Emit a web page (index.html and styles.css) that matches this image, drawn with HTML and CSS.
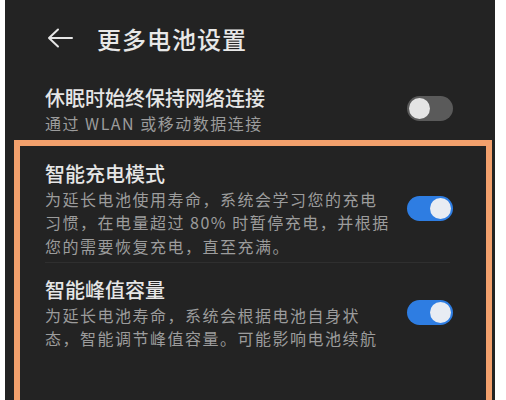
FILE: index.html
```html
<!doctype html>
<html lang="zh-CN">
<head>
    <meta charset="utf-8">
    <meta name="viewport" content="width=device-width, initial-scale=1.0">
    <title>更多电池设置</title>
    <link rel="stylesheet" href="styles.css">
</head>
<body>
    <div class="screen">
        <div class="header">
            <svg class="back" width="26" height="20" viewBox="0 0 26 20">
                <path d="M11 1.5 L2 10 L11 18.5 M2 10 H25" fill="none" stroke="#e6e6e6" stroke-width="2" stroke-linecap="round" stroke-linejoin="round"/>
            </svg>
            <h1 class="title">更多电池设置</h1>
        </div>

        <div class="item item-plain">
            <div class="text">
                <div class="item-title">休眠时始终保持网络连接</div>
                <div class="item-desc">通过 WLAN 或移动数据连接</div>
            </div>
            <div class="switch"></div>
        </div>

        <div class="highlight">
            <div class="item">
                <div class="text">
                    <div class="item-title">智能充电模式</div>
                    <div class="item-desc">为延长电池使用寿命，系统会学习您的充电<br>习惯，在电量超过 80% 时暂停充电，并根据<br>您的需要恢复充电，直至充满。</div>
                </div>
                <div class="switch on"></div>
            </div>
            <div class="divider"></div>
            <div class="item item-last">
                <div class="text">
                    <div class="item-title">智能峰值容量</div>
                    <div class="item-desc">为延长电池寿命，系统会根据电池自身状<br>态，智能调节峰值容量。可能影响电池续航</div>
                </div>
                <div class="switch on"></div>
            </div>
        </div>
    </div>
</body>
</html>
```

FILE: styles.css
```css
body {
    margin: 0;
    background-color: #fff;
    font-family: "Noto Sans CJK SC", "Noto Sans", sans-serif;
    height: 400px;
    overflow: hidden;
}
.screen {
    margin: 0 11px 0 5px;
    height: 400px;
    background-color: #232323;
    overflow: hidden;
}
.header {
    height: 76px;
    display: flex;
    align-items: center;
    padding-left: 42px;
}
.back {
    display: block;
    margin-right: 24px;
}
.title {
    margin: 0;
    font-size: 24px;
    font-weight: 500;
    letter-spacing: 1px;
    color: #e8e8e8;
    line-height: 35px;
}
.item {
    display: flex;
    align-items: center;
    justify-content: space-between;
    padding: 12.5px 33px 4px 25px;
}
.item-plain {
    padding: 6.5px 42px 0 40px;
}
.item-last {
    padding-top: 11.5px;
}
.item-title {
    font-size: 20px;
    line-height: 29px;
    color: #e6e6e6;
    font-weight: 500;
}
.item-desc {
    font-size: 16px;
    line-height: 23.5px;
    letter-spacing: 1.5px;
    color: #9c9c9c;
}
.highlight {
    margin: 5px 3px 0 9px;
    border: 6px solid #f2a06c;
    height: 400px;
}
.divider {
    height: 1px;
    background-color: #2f2f2f;
    margin: 0 36px 0 25px;
}
.switch {
    position: relative;
    width: 46px;
    height: 25px;
    border-radius: 13px;
    background-color: #5a5a5a;
    flex-shrink: 0;
}
.switch::after {
    content: "";
    position: absolute;
    top: 2px;
    left: 2px;
    width: 21px;
    height: 21px;
    border-radius: 50%;
    background-color: #e4e4e4;
}
.switch.on {
    background-color: #2e7de2;
}
.switch.on::after {
    left: 23px;
    background-color: #e8ecf3;
}
```
